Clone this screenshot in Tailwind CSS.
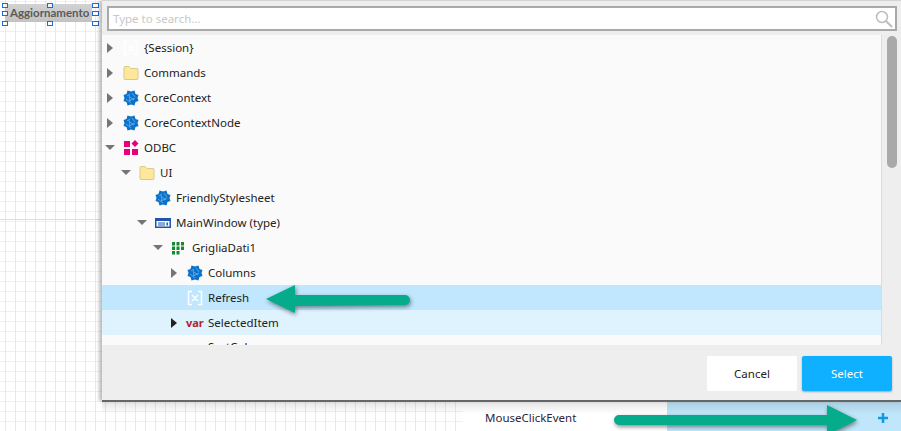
<!DOCTYPE html>
<html lang="en">
<head>
<meta charset="UTF-8">
<title>Select member</title>
<script src="https://cdn.jsdelivr.net/npm/@tailwindcss/browser@4"></script>
</head>
<body class="m-0 h-[431px] w-[901px] overflow-hidden bg-white font-['Noto_Sans',sans-serif] text-[11.500px] text-[#222]">
<svg class="hidden">
  <symbol id="net" viewBox="0 0 16 16">
    <path d="M4.500 0.500l3.500 1 3.500-1 1 3.500 3 1-1 3 1 3-3 1-1 3.500-3.500-1-3.500 1-1-3.500-3-1 1-3-1-3 3-1z" fill="#0b72c9"/>
    <path d="M4 6l3-2M9 3l3 4M3 9l5 4M7 7l4 3M6 11l6-3M6 5l1 6" stroke="#7db9ec" stroke-width="0.700"/>
  </symbol>
  <symbol id="folder" viewBox="0 0 16 16">
    <path d="M1 2.500a1 1 0 0 1 1-1h4l2 2h6a1 1 0 0 1 1 1v9a1 1 0 0 1-1 1H2a1 1 0 0 1-1-1z" fill="#fde79a" stroke="#d9c98e"/>
  </symbol>
  <symbol id="field" viewBox="0 0 16 16">
    <path d="M5 1.500H1.500v13H5M11 1.500h3.500v13H11M5 5l6 6M11 5l-6 6" fill="none" stroke="#fff" stroke-width="1.500"/>
  </symbol>
</svg>

<div class="relative h-full w-full bg-[repeating-linear-gradient(90deg,transparent_0,transparent_5px,#e9e9e9_5px,#e9e9e9_6px,transparent_6px,transparent_10px),repeating-linear-gradient(0deg,transparent_0,transparent_9px,#f0f0f0_9px,#f0f0f0_10px)]">
  <!-- selected button on the designer canvas -->
  <div class="absolute left-[5px] top-[4px] flex h-[18px] w-[87px] items-center bg-gradient-to-b from-[#d2d2d2] to-[#c2c2c2] pl-[5px] font-['Lato',sans-serif] text-[11.500px] font-bold text-[#5a5a5a]">Aggiornamento</div>
  <span class="absolute left-[2px] top-[3px] h-[5px] w-[6px] border border-[#1a6ae0] bg-white/70"></span>
  <span class="absolute left-[47px] top-[3px] h-[5px] w-[6px] border border-[#1a6ae0] bg-white/70"></span>
  <span class="absolute left-[92px] top-[3px] h-[5px] w-[7px] border border-[#1a6ae0] bg-white/70"></span>
  <span class="absolute left-[2px] top-[11px] h-[5px] w-[6px] border border-[#1a6ae0] bg-white/70"></span>
  <span class="absolute left-[92px] top-[11px] h-[5px] w-[7px] border border-[#1a6ae0] bg-white/70"></span>
  <span class="absolute left-[2px] top-[21px] h-[5px] w-[6px] border border-[#1a6ae0] bg-white/70"></span>
  <span class="absolute left-[47px] top-[21px] h-[5px] w-[6px] border border-[#1a6ae0] bg-white/70"></span>
  <span class="absolute left-[92px] top-[21px] h-[5px] w-[7px] border border-[#1a6ae0] bg-white/70"></span>
  <div class="absolute left-0 top-[219px] h-px w-[100px] bg-[#dcdcdc]"></div>

  <!-- property row below the dialog -->
  <div class="absolute left-[463px] top-[400px] flex h-[31px] w-[438px] bg-white">
    <div class="flex w-[204px] items-center pl-[22px] pt-[5px] text-[#2b2440]">MouseClickEvent</div>
    <div class="flex flex-1 items-center justify-end bg-[#bfe6fa] pr-[12px] pt-[5px]">
      <svg width="12" height="12" viewBox="0 0 12 12"><path d="M6 1v10M1 6h10" stroke="#0d9be8" stroke-width="2.500"/></svg>
    </div>
  </div>

  <!-- dialog -->
  <div class="absolute left-[102px] top-0 flex h-[400px] w-[799px] flex-col border-t border-[#d4d4d4] bg-[#eeeeee] shadow-[-3px_1px_3px_rgba(0,0,0,0.25)]">
    <div class="px-[5px] pb-[4px] pt-[5px]">
      <div class="flex h-[25px] w-[790px] items-center justify-between border-2 border-[#a9a9a9] bg-white pl-[4px] pr-[2px]">
        <span class="text-[#c8c8c8]">Type to search...</span>
        <svg width="18" height="18" viewBox="0 0 18 18" fill="none" stroke="#bdbdbd"><circle cx="7" cy="7" r="5.500" stroke-width="1.500"/><path d="M11 11l6 6" stroke-width="2"/></svg>
      </div>
    </div>
    <div class="flex min-h-0 flex-1">
      <div class="h-[310px] w-[780px] overflow-hidden border-r border-[#dcdcdc] bg-[#fafafa]">
        <div class="flex h-[25px] items-center pl-[5px]">
          <span class="h-0 w-0 border-y-[5px] border-l-[6px] border-y-transparent border-l-[#757575]"></span>
          <svg class="ml-[10px] mr-[5px]" width="16" height="16"><use href="#field"/></svg>
          <span>{Session}</span>
        </div>
        <div class="flex h-[25px] items-center pl-[5px]">
          <span class="h-0 w-0 border-y-[5px] border-l-[6px] border-y-transparent border-l-[#757575]"></span>
          <svg class="ml-[10px] mr-[5px]" width="16" height="16"><use href="#folder"/></svg>
          <span>Commands</span>
        </div>
        <div class="flex h-[25px] items-center pl-[5px]">
          <span class="h-0 w-0 border-y-[5px] border-l-[6px] border-y-transparent border-l-[#757575]"></span>
          <svg class="ml-[10px] mr-[5px]" width="16" height="16"><use href="#net"/></svg>
          <span>CoreContext</span>
        </div>
        <div class="flex h-[25px] items-center pl-[5px]">
          <span class="h-0 w-0 border-y-[5px] border-l-[6px] border-y-transparent border-l-[#757575]"></span>
          <svg class="ml-[10px] mr-[5px]" width="16" height="16"><use href="#net"/></svg>
          <span>CoreContextNode</span>
        </div>
        <div class="flex h-[25px] items-center pl-[3px]">
          <span class="h-0 w-0 border-x-[5px] border-t-[5px] border-x-transparent border-t-[#757575]"></span>
          <svg class="ml-[8px] mr-[5px]" width="16" height="16" viewBox="0 0 16 16" fill="#e6007e"><path d="M1 1h6v6H1zM1 9h6v6H1zM9 9h6v6H9zM12 0l3.500 3.500L12 7 8.500 3.500z"/></svg>
          <span>ODBC</span>
        </div>
        <div class="flex h-[25px] items-center pl-[19px]">
          <span class="h-0 w-0 border-x-[5px] border-t-[5px] border-x-transparent border-t-[#757575]"></span>
          <svg class="ml-[8px] mr-[5px]" width="16" height="16"><use href="#folder"/></svg>
          <span>UI</span>
        </div>
        <div class="flex h-[25px] items-center pl-[53px]">
          <svg class="mr-[5px]" width="16" height="16"><use href="#net"/></svg>
          <span>FriendlyStylesheet</span>
        </div>
        <div class="flex h-[25px] items-center pl-[35px]">
          <span class="h-0 w-0 border-x-[5px] border-t-[5px] border-x-transparent border-t-[#757575]"></span>
          <svg class="ml-[8px] mr-[5px]" width="16" height="16" viewBox="0 0 16 16"><path d="M0 3h16v10H0z" fill="#1c56b0"/><path d="M1.500 6h13v5.500h-13z" fill="#fff"/><path d="M3 8h7M3 10h7" stroke="#1c56b0"/><path d="M11.500 7.500h1.500v3h-1.500z" fill="#1c56b0"/></svg>
          <span>MainWindow (type)</span>
        </div>
        <div class="flex h-[25px] items-center pl-[51px]">
          <span class="h-0 w-0 border-x-[5px] border-t-[5px] border-x-transparent border-t-[#757575]"></span>
          <svg class="ml-[7px] mr-[6px]" width="16" height="16" viewBox="0 0 16 16" fill="#128a2e"><path d="M2 2h3v3.500H2zM6.500 2h3v3.500h-3zM11 2h3v3.500h-3zM2 6.500h3V10H2zM6.500 6.500h3V10h-3zM11 6.500h3V10h-3zM2 11h3v3.500H2zM6.500 11h3v3.500h-3z"/></svg>
          <span>GrigliaDati1</span>
        </div>
        <div class="flex h-[25px] items-center pl-[69px]">
          <span class="h-0 w-0 border-y-[5px] border-l-[6px] border-y-transparent border-l-[#757575]"></span>
          <svg class="ml-[10px] mr-[5px]" width="16" height="16"><use href="#net"/></svg>
          <span>Columns</span>
        </div>
        <div class="flex h-[25px] items-center bg-[#c0e7fe] pl-[85px]">
          <svg class="mr-[5px]" width="16" height="16"><use href="#field"/></svg>
          <span>Refresh</span>
        </div>
        <div class="flex h-[25px] items-center bg-[#dff3ff] pl-[69px]">
          <span class="h-0 w-0 border-y-[5px] border-l-[6px] border-y-transparent border-l-[#222]"></span>
          <span class="ml-[9px] mr-[5px] w-[17px] text-[11px] font-bold leading-none text-[#b5202e]">var</span>
          <span>SelectedItem</span>
        </div>
        <div class="flex h-[25px] items-center pl-[106px]">
          <span class="-mt-[2px]">SortColumn</span>
        </div>
      </div>
      <div class="flex-1 pl-[5px] pt-px">
        <div class="h-[132px] w-[10px] rounded-[5px] bg-[#a9a9a9]"></div>
      </div>
    </div>
    <div class="flex h-[54px] shrink-0 items-start justify-end gap-[5px] pr-[9px] pt-[10px]">
      <button class="h-[35px] w-[90px] rounded-[2px] bg-white text-[#222]">Cancel</button>
      <button class="h-[35px] w-[90px] rounded-[2px] bg-[#0fb0ff] text-white shadow-[0_1px_2px_rgba(0,0,0,0.3)]">Select</button>
    </div>
  </div>
  <!-- dialog's drop shadow over the page below it -->
  <div class="absolute left-[102px] top-[400px] h-[2px] w-[799px] bg-[#666]"></div>
  <div class="absolute left-[102px] top-[402px] h-[12px] w-[799px] bg-gradient-to-b from-black/10 to-transparent"></div>

  <!-- annotation arrows -->
  <svg class="absolute left-0 top-0 drop-shadow-[1px_2px_2px_rgba(0,0,0,0.45)]" width="901" height="431" viewBox="0 0 901 431" fill="#05ac8c">
    <path d="M266 299l29-14v10l110 0a5 5 0 0 1 0 10l-110 1v7z"/>
    <path d="M619 415H827v-10l30 15-30 15v-10H619a5 5 0 0 1 0-10z"/>
  </svg>
</div>
</body>
</html>
